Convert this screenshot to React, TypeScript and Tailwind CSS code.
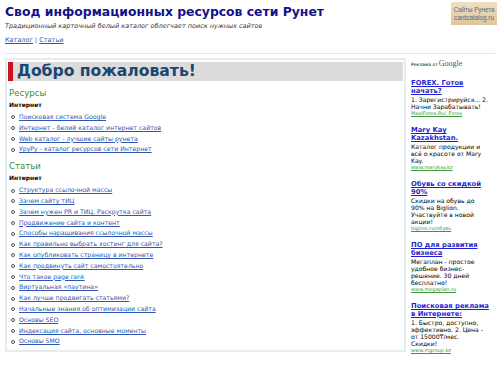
const resources = [
  'Поисковая система Google',
  'Интернет - белий каталог интернет сайтов',
  'Web каталог - лучшие сайты рунета',
  'УруРу - каталог ресурсов сети Интернет',
]

const articles = [
  'Структура ссылочной массы',
  'Зачем сайту тИЦ',
  'Зачем нужен PR и ТИЦ. Раскрутка сайта',
  'Продвижение сайта и контент',
  'Способы наращивания ссылочной массы',
  'Как правильно выбрать хостинг для сайта?',
  'Как опубликовать страницу в интернете',
  'Как продвинуть сайт самостоятельно',
  'Что такое page rank',
  'Виртуальная «паутина»',
  'Как лучше продвигать статьями?',
  'Начальные знания об оптимизации сайта',
  'Основы SEO',
  'Индексация сайта, основные моменты',
  'Основы SMO',
]

// line breaks kept as in the ad block
const ads = [
  {
    title: ['FOREX. Готов', 'начать?'],
    text: ['1. Зарегистрируйся... 2.', 'Начни Зарабатывать!'],
    url: 'MaxiForex.Ru/_Forex',
  },
  {
    title: ['Mary Kay', 'Kazakhstan.'],
    text: ['Каталог продукции и', 'всё о красоте от Mary', 'Kay.'],
    url: 'www.marykay.kz',
  },
  {
    title: ['Обувь со скидкой', '90%'],
    text: ['Скидки на обувь до', '90% на Biglion.', 'Участвуйте в новой', 'акции!'],
    url: 'biglion.ru/обувь',
  },
  {
    title: ['ПО для развития', 'бизнеса'],
    text: ['Мегаплан - простое', 'удобное бизнес-', 'решение. 30 дней', 'бесплатно!'],
    url: 'www.megaplan.ru',
  },
  {
    title: ['Поисковая реклама', 'в Интернете:'],
    text: ['1. Быстро, доступно,', 'эффективно. 2. Цена -', 'от 15000₸/мес.', 'Скидки!'],
    url: 'www.mgroup.kz',
  },
]

const LinkList = ({ items }: { items: string[] }) => (
  <ul className="mt-[3px] pl-[2px]">
    {items.map((item) => (
      <li key={item} className="flex items-center gap-[4px] leading-[10.8px]">
        <span className="h-[4px] w-[4px] shrink-0 rounded-full border border-[#555]" />
        <a href="#" className="text-[#2f56b0] underline">
          {item}
        </a>
      </li>
    ))}
  </ul>
)

export default function App() {
  return (
    <div className="h-[375px] w-[500px] overflow-hidden bg-white font-['DejaVu_Sans',Verdana,sans-serif] text-black">
      {/* header */}
      <div className="flex items-start justify-between pl-[5px] pr-[3px] pt-[2px]">
        <div>
          <h1 className="text-[12.4px] font-bold leading-[20px] text-[#12128a]">
            Свод информационных ресурсов сети Рунет
          </h1>
          <p className="text-[6.5px] italic leading-[8px] text-[#333]">
            Традиционный карточный белый каталог облегчает поиск нужных сайтов
          </p>
        </div>
        <div className="flex h-[23px] w-[46px] flex-col items-center justify-center bg-gradient-to-b from-[#f1dfc2] to-[#e0c49a] font-['Liberation_Sans',Arial,sans-serif] text-[6.3px] leading-[8px] text-[#56688c]">
          <span>Сайты Рунета</span>
          <span>cardcatalog.ru</span>
        </div>
      </div>

      <div className="mt-[6px] pl-[5px] text-[6.5px] leading-[8px] text-[#555]">
        <a href="#" className="text-[#2f56b0] underline">
          Каталог
        </a>{' '}
        |{' '}
        <a href="#" className="text-[#2f56b0] underline">
          Статьи
        </a>
      </div>

      <div className="mx-[5px] mt-[9px] border-t border-[#dde9ee]" />

      <div className="mt-[4px] flex gap-[5px] pl-[5px]">
        {/* main */}
        <div className="h-[294px] w-[401px] border-2 border-[#e4eef1] px-[1px] pt-[2px]">
          <div className="flex h-[19px] items-center bg-[#dcdcdc]">
            <div className="h-full w-[5px] bg-[#c8141e]" />
            <h2 className="pl-[4px] text-[15.6px] font-bold leading-none text-[#1a4670]">
              Добро пожаловать!
            </h2>
          </div>

          <div className="pl-[1px] text-[6.2px]">
            <h3 className="mt-[6px] text-[8.6px] leading-[12px] text-[#3f8a3a]">
              Ресурсы
            </h3>
            <div className="mt-[1px] text-[6px] font-bold leading-[9px]">
              Интернет
            </div>
            <LinkList items={resources} />

            <h3 className="mt-[5px] text-[8.6px] leading-[12px] text-[#3f8a3a]">
              Статьи
            </h3>
            <div className="mt-[1px] text-[6px] font-bold leading-[9px]">
              Интернет
            </div>
            <LinkList items={articles} />
          </div>
        </div>

        {/* sidebar */}
        <div className="w-[84px] pt-[2px]">
          <div className="flex items-baseline gap-[1px] text-[4.5px] leading-[8px]">
            <span>Реклама от</span>
            <span className="font-['Liberation_Serif',serif] text-[8px] text-[#555]">
              Google
            </span>
          </div>
          <div className="mt-[11px] flex flex-col gap-[10px]">
            {ads.map((ad) => (
              <div key={ad.url} className="whitespace-nowrap">
                <a
                  href="#"
                  className="block text-[6.8px] font-bold leading-[7.5px] text-[#1f1fd0] underline"
                >
                  {ad.title.map((line) => (
                    <span key={line} className="block">
                      {line}
                    </span>
                  ))}
                </a>
                <p className="mt-[1px] text-[6.1px] leading-[7px]">
                  {ad.text.map((line) => (
                    <span key={line} className="block">
                      {line}
                    </span>
                  ))}
                </p>
                <a
                  href="#"
                  className="block text-[5px] leading-[7px] text-[#3a9a3a] underline"
                >
                  {ad.url}
                </a>
              </div>
            ))}
          </div>
        </div>
      </div>
    </div>
  )
}
